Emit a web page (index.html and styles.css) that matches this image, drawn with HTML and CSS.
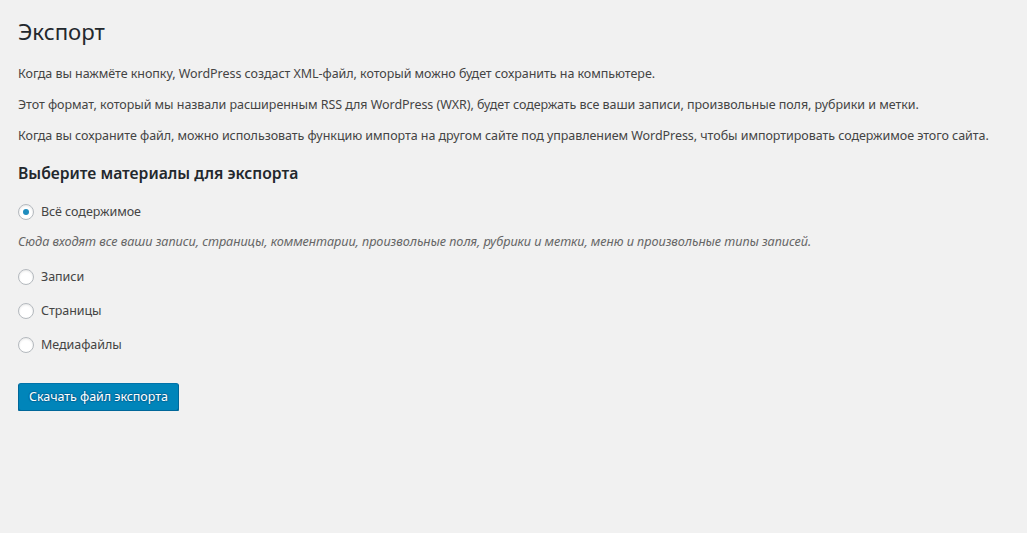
FILE: index.html
```html
<!DOCTYPE html>
<html lang="ru">
<head>
<meta charset="utf-8">
<title>Экспорт</title>
<link rel="stylesheet" href="styles.css">
</head>
<body>
<div class="wrap">
  <h1 class="title">Экспорт</h1>
  <p>Когда вы нажмёте кнопку, WordPress создаст XML-файл, который можно будет сохранить на компьютере.</p>
  <p>Этот формат, который мы назвали расширенным RSS для WordPress (WXR), будет содержать все ваши записи, произвольные поля, рубрики и метки.</p>
  <p>Когда вы сохраните файл, можно использовать функцию импорта на другом сайте под управлением WordPress, чтобы импортировать содержимое этого сайта.</p>
  <h2 class="subtitle">Выберите материалы для экспорта</h2>
  <form class="export-form">
    <label class="choice"><input type="radio" name="content" checked><span>Всё содержимое</span></label>
    <p class="description">Сюда входят все ваши записи, страницы, комментарии, произвольные поля, рубрики и метки, меню и произвольные типы записей.</p>
    <label class="choice"><input type="radio" name="content"><span>Записи</span></label>
    <label class="choice"><input type="radio" name="content"><span>Страницы</span></label>
    <label class="choice"><input type="radio" name="content"><span>Медиафайлы</span></label>
    <div class="submit"><button type="button" class="button-primary">Скачать файл экспорта</button></div>
  </form>
</div>
</body>
</html>
```

FILE: styles.css
```css
html, body {
  margin: 0;
  padding: 0;
  background: #f1f1f1;
}
body {
  font-family: "Noto Sans", "Open Sans", sans-serif;
  font-size: 12.5px;
  letter-spacing: -0.05px;
  line-height: 18px;
  color: #444;
}
.wrap {
  padding: 0 18px;
}
.title {
  margin: 0;
  padding: 17px 0 5px;
  font-size: 22.2px;
  font-weight: 400;
  letter-spacing: 0;
  line-height: 30px;
  color: #23282d;
}
p {
  margin: 13px 0;
}
.subtitle {
  margin: 17px 0 0;
  font-size: 15.7px;
  font-weight: 600;
  letter-spacing: 0;
  line-height: 22px;
  color: #23282d;
}
.export-form {
  display: flex;
  flex-direction: column;
  align-items: flex-start;
  padding-top: 14px;
}
.choice {
  display: flex;
  align-items: center;
  gap: 7px;
  height: 20px;
  margin: 4px 0 10px;
}
.choice input {
  appearance: none;
  -webkit-appearance: none;
  margin: 0;
  width: 16px;
  height: 16px;
  border-radius: 50%;
  border: 1px solid #b4b9be;
  background: #fff;
  box-shadow: inset 0 1px 2px rgba(0,0,0,.1);
  display: grid;
  place-items: center;
}
.choice input:checked::before {
  content: "";
  width: 6px;
  height: 6px;
  border-radius: 50%;
  background: #1e8cbe;
}
.description {
  margin: 0 0 13px;
  font-size: 12.7px;
  font-style: italic;
  color: #666;
}
.submit {
  padding-top: 18px;
}
.button-primary {
  height: 28px;
  padding: 0 10px 1px;
  font-family: inherit;
  font-size: 12.5px;
  letter-spacing: -0.05px;
  line-height: 26px;
  color: #fff;
  background: #0085ba;
  border: 1px solid;
  border-color: #0073aa #006799 #006799;
  border-radius: 3px;
  box-shadow: 0 1px 0 #006799;
  text-shadow: 0 -1px 1px #006799, 1px 0 1px #006799, 0 1px 1px #006799, -1px 0 1px #006799;
  cursor: pointer;
}
```
